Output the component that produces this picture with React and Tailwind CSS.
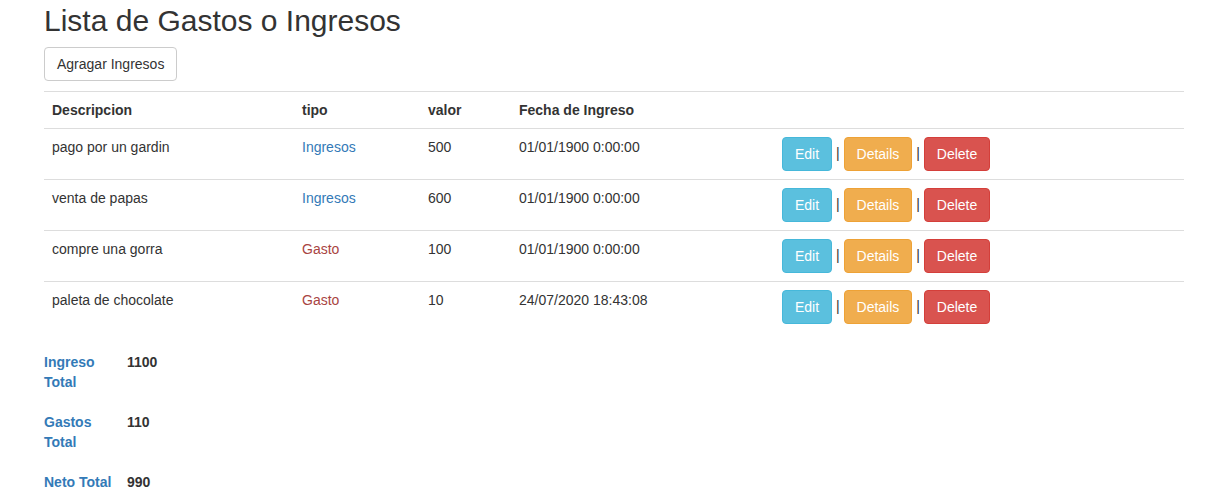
import React from "react";

const rows = [
  { desc: "pago por un gardin", tipo: "Ingresos", valor: 500, fecha: "01/01/1900 0:00:00" },
  { desc: "venta de papas", tipo: "Ingresos", valor: 600, fecha: "01/01/1900 0:00:00" },
  { desc: "compre una gorra", tipo: "Gasto", valor: 100, fecha: "01/01/1900 0:00:00" },
  { desc: "paleta de chocolate", tipo: "Gasto", valor: 10, fecha: "24/07/2020 18:43:08" },
];

const totals = [
  { label: "Ingreso Total", value: 1100 },
  { label: "Gastos Total", value: 110 },
  { label: "Neto Total", value: 990 },
];

const btn = "inline-block px-3 py-[6px] border rounded text-sm leading-5 text-white align-middle";

export default function App() {
  return (
    <div
      className="min-h-screen bg-white text-[#333] text-sm leading-5"
      style={{ fontFamily: '"Liberation Sans", Arial, sans-serif' }}
    >
      <div className="w-[1140px] ml-[44px] pt-[4px]">
        <h2 className="text-[30px] leading-[33px] mb-[10px]">Lista de Gastos o Ingresos</h2>

        <p className="mb-[10px]">
          <button className="px-3 py-[6px] border border-[#ccc] rounded bg-white text-[#333] text-sm leading-5">
            Agragar Ingresos
          </button>
        </p>

        {/* tabla */}
        <table className="w-full border-collapse mb-5">
          <tbody>
            <tr className="text-left">
              <th className="w-[250px] p-2 border-t border-[#ddd] font-bold text-left">Descripcion</th>
              <th className="w-[126px] p-2 border-t border-[#ddd] font-bold text-left">tipo</th>
              <th className="w-[91px] p-2 border-t border-[#ddd] font-bold text-left">valor</th>
              <th className="w-[263px] p-2 border-t border-[#ddd] font-bold text-left">Fecha de Ingreso</th>
              <th className="p-2 border-t border-[#ddd]"></th>
            </tr>
            {rows.map((r, i) => (
              <tr key={i}>
                <td className="p-2 border-t border-[#ddd] align-top">{r.desc}</td>
                <td
                  className={`p-2 border-t border-[#ddd] align-top ${
                    r.tipo === "Gasto" ? "text-[#a94442]" : "text-[#337ab7]"
                  }`}
                >
                  {r.tipo}
                </td>
                <td className="p-2 border-t border-[#ddd] align-top">{r.valor}</td>
                <td className="p-2 border-t border-[#ddd] align-top">{r.fecha}</td>
                <td className="p-2 border-t border-[#ddd] align-top whitespace-nowrap">
                  <a className={`${btn} bg-[#5bc0de] border-[#46b8da]`}>Edit</a> |{" "}
                  <a className={`${btn} bg-[#f0ad4e] border-[#eea236]`}>Details</a> |{" "}
                  <a className={`${btn} bg-[#d9534f] border-[#d43f3a]`}>Delete</a>
                </td>
              </tr>
            ))}
          </tbody>
        </table>

        {/* totales */}
        <div className="flex flex-col gap-5 font-bold">
          {totals.map((t) => (
            <div key={t.label} className="flex gap-2">
              <div className="w-[75px] text-[#337ab7]">{t.label}</div>
              <div>{t.value}</div>
            </div>
          ))}
        </div>
      </div>
    </div>
  );
}
